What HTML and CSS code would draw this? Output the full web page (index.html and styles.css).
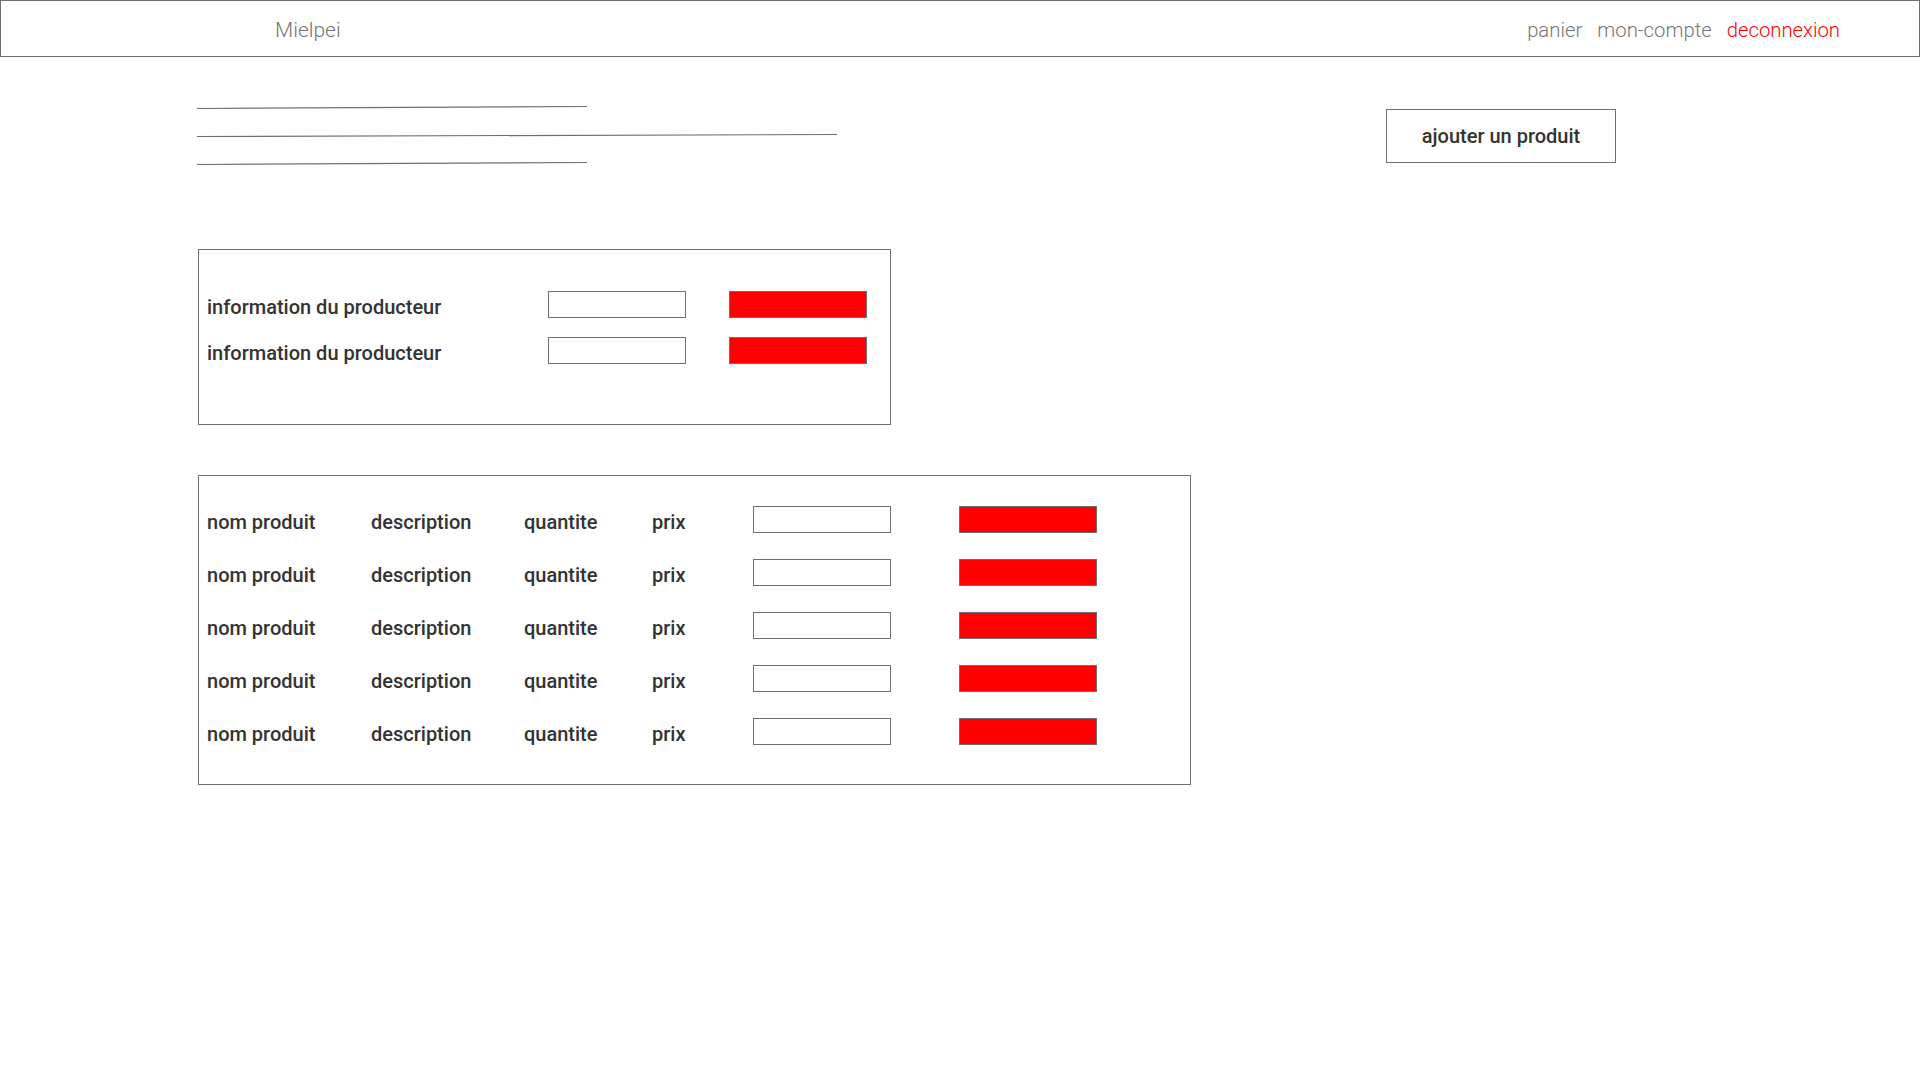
FILE: index.html
```html
<!DOCTYPE html>
<html lang="fr">
<head>
<meta charset="utf-8">
<title>Mielpei</title>
<link rel="stylesheet" href="styles.css">
</head>
<body>
<header class="topbar">
  <span class="brand">Mielpei</span>
  <nav class="nav">
    <a class="nav-link" href="#">panier</a>
    <a class="nav-link" href="#">mon-compte</a>
    <a class="nav-link nav-logout" href="#">deconnexion</a>
  </nav>
</header>

<main class="main">
  <div class="top-row">
    <svg class="placeholder-lines" width="640" height="68" viewBox="0 0 640 68" aria-hidden="true">
      <line x1="0" y1="8.5" x2="390" y2="6.5"/>
      <line x1="0" y1="36.5" x2="640" y2="34.5"/>
      <line x1="0" y1="64.5" x2="390" y2="62.5"/>
    </svg>
    <button class="add-btn" type="button">ajouter un produit</button>
  </div>

  <section class="panel producer">
    <div class="producer-row">
      <span class="label">information du producteur</span>
      <input class="field" type="text">
      <button class="del" type="button" aria-label="supprimer"></button>
    </div>
    <div class="producer-row">
      <span class="label">information du producteur</span>
      <input class="field" type="text">
      <button class="del" type="button" aria-label="supprimer"></button>
    </div>
  </section>

  <section class="panel products">
    <div class="product-row">
      <span class="label">nom produit</span>
      <span class="label">description</span>
      <span class="label">quantite</span>
      <span class="label">prix</span>
      <input class="field" type="text">
      <button class="del" type="button" aria-label="supprimer"></button>
    </div>
    <div class="product-row">
      <span class="label">nom produit</span>
      <span class="label">description</span>
      <span class="label">quantite</span>
      <span class="label">prix</span>
      <input class="field" type="text">
      <button class="del" type="button" aria-label="supprimer"></button>
    </div>
    <div class="product-row">
      <span class="label">nom produit</span>
      <span class="label">description</span>
      <span class="label">quantite</span>
      <span class="label">prix</span>
      <input class="field" type="text">
      <button class="del" type="button" aria-label="supprimer"></button>
    </div>
    <div class="product-row">
      <span class="label">nom produit</span>
      <span class="label">description</span>
      <span class="label">quantite</span>
      <span class="label">prix</span>
      <input class="field" type="text">
      <button class="del" type="button" aria-label="supprimer"></button>
    </div>
    <div class="product-row">
      <span class="label">nom produit</span>
      <span class="label">description</span>
      <span class="label">quantite</span>
      <span class="label">prix</span>
      <input class="field" type="text">
      <button class="del" type="button" aria-label="supprimer"></button>
    </div>
  </section>
</main>
</body>
</html>
```

FILE: styles.css
```css
* {
  box-sizing: border-box;
}

html, body {
  margin: 0;
  padding: 0;
  background: #ffffff;
}

body {
  font-family: Roboto, "Liberation Sans", sans-serif;
  color: #333333;
}

/* Header */
.topbar {
  height: 57px;
  border: 1px solid #707070;
  display: flex;
  align-items: center;
  justify-content: space-between;
  padding: 2px 79px 0 274px;
}

.brand {
  font-size: 21px;
  font-weight: 300;
  color: #767676;
}

.nav {
  display: flex;
  gap: 15px;
}

.nav-link {
  font-size: 20.3px;
  font-weight: 300;
  color: #767676;
  text-decoration: none;
}

.nav-logout {
  color: #ff0000;
}

/* Main */
.main {
  padding-left: 197px;
}

.top-row {
  width: 1419px;
  margin-top: 43px;
  display: flex;
  justify-content: space-between;
  align-items: flex-start;
}

.placeholder-lines {
  display: block;
}

.placeholder-lines line {
  stroke: #6e6e6e;
  stroke-width: 1.2;
}

.add-btn {
  margin-top: 9px;
  width: 230px;
  height: 54px;
  border: 1px solid #707070;
  background: #ffffff;
  font-family: Roboto, "Liberation Sans", sans-serif;
  font-size: 20px;
  font-weight: 500;
  color: #333333;
  padding: 0;
  cursor: pointer;
}

/* Panels */
.panel {
  margin-left: 1px;
  border: 1px solid #707070;
  padding-left: 8px;
}

.producer {
  width: 693px;
  height: 176px;
  margin-top: 81px;
  padding-top: 31px;
}

.products {
  width: 993px;
  height: 310px;
  margin-top: 50px;
  padding-top: 17px;
}

.producer-row {
  height: 46px;
  display: grid;
  grid-template-columns: 341px 138px 181px;
  align-items: center;
}

.producer-row .del {
  margin-left: 43px;
}

.product-row {
  height: 53px;
  display: grid;
  grid-template-columns: 164px 153px 128px 101px 138px 206px;
  align-items: center;
}

.product-row .del {
  margin-left: 68px;
}

.label {
  font-size: 20px;
  font-weight: 500;
  color: #333333;
  padding-top: 5px;
  white-space: nowrap;
}

.field {
  width: 138px;
  height: 27px;
  border: 1px solid #707070;
  background: #ffffff;
  padding: 0;
  margin: 0;
  font: inherit;
}

.del {
  width: 138px;
  height: 27px;
  border: 1px solid #707070;
  background: #ff0000;
  padding: 0;
  margin: 0;
}
```
